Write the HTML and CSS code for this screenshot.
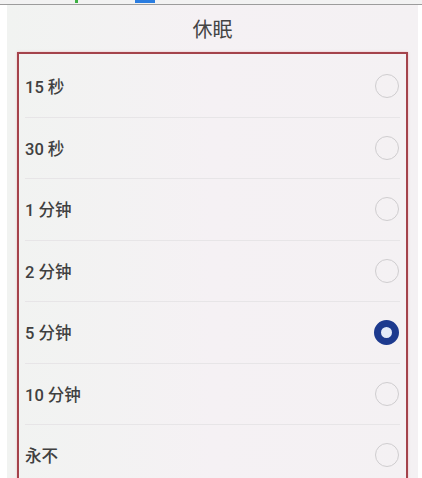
FILE: index.html
```html
<!DOCTYPE html>
<html lang="zh-CN">
<head>
    <meta charset="UTF-8">
    <meta name="viewport" content="width=device-width, initial-scale=1.0">
    <title>休眠</title>
    <link rel="stylesheet" href="styles.css">
</head>
<body>
    <div class="toolbar">
        <span class="tool-dot"></span>
        <span class="tool-tab"></span>
    </div>

    <div class="screen">
        <header class="title-bar">
            <h1>休眠</h1>
        </header>

        <div class="option-box">
            <ul class="option-list">
                <li class="option"><span class="label">15 秒</span><span class="radio"></span></li>
                <li class="option"><span class="label">30 秒</span><span class="radio"></span></li>
                <li class="option"><span class="label">1 分钟</span><span class="radio"></span></li>
                <li class="option"><span class="label">2 分钟</span><span class="radio"></span></li>
                <li class="option"><span class="label">5 分钟</span><span class="radio checked"></span></li>
                <li class="option"><span class="label">10 分钟</span><span class="radio"></span></li>
                <li class="option"><span class="label">永不</span><span class="radio"></span></li>
            </ul>
        </div>
    </div>
</body>
</html>
```

FILE: styles.css
```css
* {
    margin: 0;
    padding: 0;
    box-sizing: border-box;
}

body {
    font-family: Roboto, "Noto Sans CJK SC", sans-serif;
    background-color: #ffffff;
    color: #3a3a3a;
    height: 478px;
    overflow: hidden;
}

/* thin editor strip along the top */
.toolbar {
    height: 5px;
    background-color: #f2f2f2;
    border-bottom: 1px solid #9c9c9c;
    position: relative;
}

.tool-dot {
    position: absolute;
    left: 75px;
    top: 0;
    width: 3px;
    height: 3px;
    background-color: #3cb043;
}

.tool-tab {
    position: absolute;
    left: 135px;
    top: 0;
    width: 20px;
    height: 3px;
    background-color: #2b7de0;
}

.screen {
    margin-left: 7px;
    width: 411px;
    height: 473px;
    background: linear-gradient(90deg, #f1f3f1 0%, #f5f1f4 50%, #f4f1f3 100%);
}

.title-bar {
    height: 47px;
    display: flex;
    align-items: center;
    justify-content: center;
}

.title-bar h1 {
    font-family: "Noto Sans CJK SC", sans-serif;
    font-size: 20px;
    font-weight: 400;
    color: #444;
}

.option-box {
    margin-left: 10px;
    width: 391px;
    height: 440px;
    border: 2px solid #a4434b;
    border-bottom: none;
    box-shadow: 0 0 2px rgba(230, 120, 130, 0.5);
}

.option-list {
    list-style: none;
    padding: 2px 6px 0 6px;
}

.option {
    height: 61.5px;
    display: flex;
    align-items: center;
    justify-content: space-between;
    border-bottom: 1px solid #e7e5e7;
}

.label {
    font-size: 16.5px;
    font-weight: 500;
    color: #404040;
}

.radio {
    width: 24px;
    height: 24px;
    border-radius: 50%;
    border: 1.5px solid #cfcdcf;
    margin-right: 1px;
}

.radio.checked {
    width: 25px;
    height: 25px;
    border: 7px solid #1d3a8e;
    background-color: #e4ebf8;
}
```
